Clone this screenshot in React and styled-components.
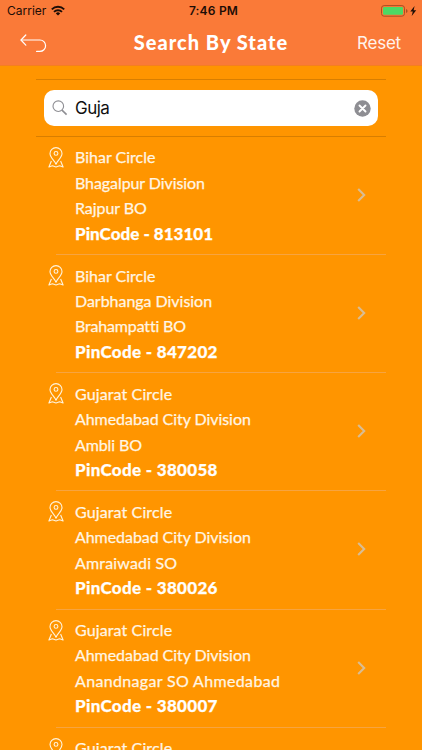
import React from 'react';
import styled, { createGlobalStyle } from 'styled-components'

// [text, letter spacing in px]
const offices = [
    { circle: ['Bihar Circle', 0.01], division: ['Bhagalpur Division', -0.08], office: ['Rajpur BO', -0.07], pin: ['813101', 0.02] },
    { circle: ['Bihar Circle', 0.01], division: ['Darbhanga Division', -0.03], office: ['Brahampatti BO', -0.17], pin: ['847202', 0.31] },
    { circle: ['Gujarat Circle', 0.12], division: ['Ahmedabad City Division', -0.06], office: ['Ambli BO', -0.1], pin: ['380058', 0.31] },
    { circle: ['Gujarat Circle', 0.12], division: ['Ahmedabad City Division', -0.06], office: ['Amraiwadi SO', 0.17], pin: ['380026', 0.31] },
    { circle: ['Gujarat Circle', 0.12], division: ['Ahmedabad City Division', -0.06], office: ['Anandnagar SO Ahmedabad', 0.34], pin: ['380007', 0.31] },
    { circle: ['Gujarat Circle', 0.12] },
]

const WifiIcon = () => (
    <svg width="14" height="11" viewBox="0 0 14 11" fill="none" stroke="#1d0d06" strokeWidth="1.9">
        <path d="M0.8 4.3a8.8 8.8 0 0 1 12.4 0" />
        <path d="M3 6.9a5.7 5.7 0 0 1 8 0" />
        <path d="M7 10.6L4.8 8.4a3.1 3.1 0 0 1 4.4 0z" fill="#1d0d06" stroke="none" />
    </svg>
)

const BatteryIcon = () => (
    <svg width="36" height="12" viewBox="0 0 36 12">
        <rect x="0.5" y="0.6" width="23" height="10.6" rx="2.6" fill="none" stroke="#a94f24" />
        <rect x="2" y="2.1" width="20" height="7.6" rx="1.2" fill="#4cd964" />
        <path d="M25 4q1.6 0.6 1.6 2t-1.6 2z" fill="#a94f24" />
        <path d="M33.6 0.9L29.3 6.5h2.5l-1.1 4.6 4.5-5.8h-2.6z" fill="#1d0d06" />
    </svg>
)

const BackIcon = () => (
    <svg width="28" height="20" viewBox="0 0 28 20" fill="none" stroke="#fff" strokeWidth="1.2" strokeLinecap="round" strokeLinejoin="round">
        <path d="M5.8 1L1 6l4.8 5.2" />
        <path d="M1.2 6h18.7a5.7 5.7 0 0 1 0 11.4h-3.3" />
    </svg>
)

const SearchIcon = () => (
    <svg width="16" height="16" viewBox="0 0 16 16" fill="none" stroke="#8e8e93" strokeWidth="1.1">
        <circle cx="6.3" cy="6.2" r="5.3" />
        <path d="M10 10.1l4.6 4.5" strokeWidth="1.6" />
    </svg>
)

const ClearIcon = () => (
    <svg width="17" height="17" viewBox="0 0 17 17">
        <circle cx="8.5" cy="8.5" r="8.2" fill="#8e8e93" />
        <path d="M5.5 5.5l6 6M11.5 5.5l-6 6" stroke="#fff" strokeWidth="1.9" strokeLinecap="round" />
    </svg>
)

const PinIcon = () => (
    <svg width="16" height="21" viewBox="0 0 16 21" fill="none" stroke="#fff3dc" strokeWidth="1.1" strokeLinejoin="round">
        <path d="M8 17.2C6.4 13.4 2 10.6 2 6.6a6 6 0 0 1 12 0c0 4-4.4 6.8-6 10.6z" />
        <circle cx="8" cy="6.4" r="1.9" />
        <path d="M3.4 14L0.9 20l3.5-1.3L8 20l3.6-1.3 3.5 1.3-2.5-6" />
    </svg>
)

const ChevronIcon = () => (
    <svg width="9" height="14" viewBox="0 0 9 14" fill="none" stroke="#d9bd94" strokeWidth="2.1">
        <path d="M1.2 0.9l6 6.1-6 6.1" />
    </svg>
)

const OfficeRow = ({ circle, division, office, pin }) => {
    return (
        <Row>
            <PinIcon />
            <Details>
                <Line $spacing={circle[1]}>{circle[0]}</Line>
                {division && <Line $spacing={division[1]}>{division[0]}</Line>}
                {office && <Line $spacing={office[1]}>{office[0]}</Line>}
                {pin && <PinCode $spacing={pin[1]}>PinCode - {pin[0]}</PinCode>}
            </Details>
            <ChevronIcon />
        </Row>
    )
}

const App = () => {
    return (
        <Screen>
            <GlobalStyle />
            <Header>
                <StatusBar>
                    <Carrier>Carrier <WifiIcon /></Carrier>
                    <Clock>7:46 PM</Clock>
                    <Battery><BatteryIcon /></Battery>
                </StatusBar>
                <NavBar>
                    <BackButton aria-label="Back"><BackIcon /></BackButton>
                    <Title>Search By State</Title>
                    <ResetButton>Reset</ResetButton>
                </NavBar>
            </Header>
            <Content>
                <SearchBar>
                    <SearchField>
                        <SearchIcon />
                        <Query>Guja</Query>
                        <ClearIcon />
                    </SearchField>
                </SearchBar>
                {offices.map((item, index) => <OfficeRow key={index} {...item} />)}
            </Content>
        </Screen>
    )
}

export default App

const GlobalStyle = createGlobalStyle`
    body{
        margin: 0;
        overflow: hidden;
    }
    *{
        box-sizing: border-box;
    }
    svg{
        display: block;
        flex-shrink: 0;
    }
`

const Screen = styled.div`
    height: 100vh;
    overflow: hidden;
    background-color: #ff9500;
    font-family: Lato, sans-serif;
`

const Header = styled.div`
    height: 66px;
    background-color: #fa7a38;
    border-bottom: 1px solid #f57f20;
`

const StatusBar = styled.div`
    display: grid;
    grid-template-columns: 1fr auto 1fr;
    align-items: center;
    height: 21px;
    padding: 0 5px 0 7px;
    color: #1d0d06;
    font-family: Inter, sans-serif;
    font-size: 12px;
`

const Carrier = styled.div`
    display: flex;
    align-items: center;
    gap: 5px;
`

const Clock = styled.div`
    font-weight: 600;
    letter-spacing: 0.2px;
    padding-left: 3px;
`

const Battery = styled.div`
    display: flex;
    justify-content: flex-end;
`

const NavBar = styled.div`
    display: grid;
    grid-template-columns: 1fr auto 1fr;
    align-items: center;
    height: 43px;
    padding: 0 21px 0 20px;
`

const BackButton = styled.button`
    justify-self: start;
    padding: 2px 0 0;
    border: 0;
    background: none;
`

const Title = styled.h1`
    margin: 0;
    padding: 0 0 1px 1px;
    color: white;
    font-size: 20px;
    font-weight: 900;
    letter-spacing: 1px;
`

const ResetButton = styled.button`
    justify-self: end;
    padding: 0;
    border: 0;
    background: none;
    color: #fff3ec;
    font-family: Inter, sans-serif;
    font-size: 17px;
    letter-spacing: -0.2px;
`

const Content = styled.div`
    padding: 13px 36px 0;
`

const SearchBar = styled.div`
    height: 58px;
    padding: 10px 8px;
    border-top: 1px solid #d87e00;
    border-bottom: 1px solid #d87e00;
`

const SearchField = styled.div`
    display: flex;
    align-items: center;
    height: 36px;
    padding: 0 7px 0 8px;
    border-radius: 10px;
    background-color: white;
`

const Query = styled.div`
    flex: 1;
    padding-left: 7px;
    color: #111;
    font-family: Inter, sans-serif;
    font-size: 17px;
    letter-spacing: -0.5px;
`

const Row = styled.div`
    display: flex;
    height: 118.15px;
    padding: 10px 20px 0 12px;
    background: linear-gradient(#f7a440, #f7a440) 20px 100% / 100% 1px no-repeat;

    > svg:last-child{
        margin-top: 41px;
    }
`

const Details = styled.div`
    flex: 1;
    padding-left: 11px;
    margin-top: -2.6px;
`

const Line = styled.div`
    color: #fff6e5;
    font-size: 16px;
    line-height: 25.4px;
    letter-spacing: ${props => props.$spacing}px;
    white-space: nowrap;
    -webkit-text-stroke: 0.25px #fff6e5;
`

const PinCode = styled(Line)`
    color: white;
    font-size: 17px;
    font-weight: 900;
`
